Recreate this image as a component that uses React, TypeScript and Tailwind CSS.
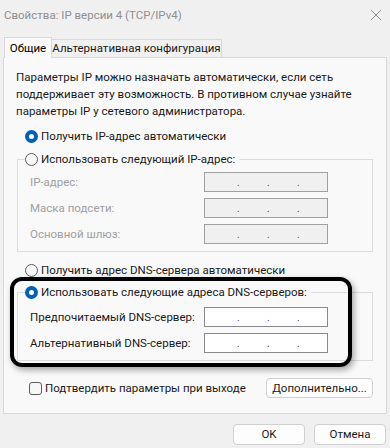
function Radio({ checked }: { checked?: boolean }) {
  return checked ? (
    <span className="flex h-[13px] w-[13px] shrink-0 items-center justify-center rounded-full bg-[#005fb8]">
      <span className="h-[5px] w-[5px] rounded-full bg-white" />
    </span>
  ) : (
    <span className="h-[13px] w-[13px] shrink-0 rounded-full border border-[#5c5c5c] bg-[#f7f7f7]" />
  );
}

function IpBox({ disabled }: { disabled?: boolean }) {
  return (
    <div
      className={
        "relative h-[20px] w-[124px] shrink-0 border " +
        (disabled ? "border-[#a0a0a0] bg-[#f0f0f0]" : "border-[#8a8a8a] bg-white")
      }
    >
      <div className="flex h-full items-end pb-[3px] pl-[32px] text-[10px] leading-none text-[#4a4a4a]">
        <span className="w-[30px]">.</span>
        <span className="w-[30px]">.</span>
        <span>.</span>
      </div>
    </div>
  );
}

function Row({ label, disabled }: { label: string; disabled?: boolean }) {
  return (
    <div className="flex items-center">
      <span className={"w-[174px] shrink-0 " + (disabled ? "text-[#a0a0a0]" : "text-[#1a1a1a]")}>{label}</span>
      <IpBox disabled={disabled} />
    </div>
  );
}

export default function App() {
  return (
    <div
      className="relative flex h-[448px] w-[390px] flex-col overflow-hidden whitespace-nowrap bg-[#f0f0f0] text-[11.5px] leading-[17px] text-[#1a1a1a]"
      style={{ fontFamily: 'Roboto, "Liberation Sans", Arial, sans-serif' }}
    >
      {/* title bar */}
      <div className="flex h-[30px] items-center justify-between pl-[4px] pr-[4px]">
        <span className="text-[#8f8f8f]">Свойства: IP версии 4 (TCP/IPv4)</span>
        <svg width="14" height="14" viewBox="0 0 14 14" className="mr-[3px]">
          <path d="M2 2 L12 12 M12 2 L2 12" stroke="#8f8f8f" strokeWidth="1" />
        </svg>
      </div>

      {/* tabs */}
      <div className="mt-[7px] flex items-end pl-[4px]">
        <div className="relative z-10 -mb-px flex h-[21px] w-[48px] items-center justify-center border border-b-0 border-[#d9d9d9] bg-[#f9f9f9] text-black">
          Общие
        </div>
        <div className="flex h-[18px] w-[170px] items-center justify-center border border-b-0 border-l-0 border-[#d9d9d9] bg-[#f0f0f0]">
          Альтернативная конфигурация
        </div>
      </div>

      {/* panel */}
      <div className="mx-[3px] flex h-[357px] flex-col border border-[#d9d9d9] bg-[#f9f9f9] pl-[12px] pr-[13px] pt-[11px]">
        <p>
          Параметры IP можно назначать автоматически, если сеть
          <br />
          поддерживает эту возможность. В противном случае узнайте
          <br />
          параметры IP у сетевого администратора.
        </p>

        <label className="ml-[9px] mt-[8px] flex items-center gap-[3px]">
          <Radio checked />
          <span>Получить IP-адрес автоматически</span>
        </label>

        <fieldset className="ml-[1px] mt-[6px] border border-[#dcdcdc] pb-[7px] pl-[12px]">
          <legend className="-ml-[5px] flex items-center gap-[3px] pr-[4px]">
            <Radio />
            <span>Использовать следующий IP-адрес:</span>
          </legend>
          <div className="mt-[4px] flex flex-col gap-[6px]">
            <Row label="IP-адрес:" disabled />
            <Row label="Маска подсети:" disabled />
            <Row label="Основной шлюз:" disabled />
          </div>
        </fieldset>

        <label className="ml-[9px] mt-[10px] flex items-center gap-[3px]">
          <Radio />
          <span>Получить адрес DNS-сервера автоматически</span>
        </label>

        <fieldset className="ml-[1px] mt-[5px] border border-[#dcdcdc] pb-[7px] pl-[12px]">
          <legend className="-ml-[5px] flex items-center gap-[3px] pr-[4px]">
            <Radio checked />
            <span>Использовать следующие адреса DNS-серверов:</span>
          </legend>
          <div className="mt-[6px] flex flex-col gap-[6px]">
            <Row label="Предпочитаемый DNS-сервер:" />
            <Row label="Альтернативный DNS-сервер:" />
          </div>
        </fieldset>

        <div className="mt-[17px] flex items-center justify-between">
          <label className="ml-[13px] flex items-center gap-[3px]">
            <span className="h-[13px] w-[13px] rounded-[3px] border border-[#5c5c5c] bg-[#f7f7f7]" />
            <span>Подтвердить параметры при выходе</span>
          </label>
          <button className="h-[20px] w-[107px] rounded-[4px] border border-[#d0d0d0] bg-[#fdfdfd]">
            Дополнительно...
          </button>
        </div>
      </div>

      {/* dialog buttons */}
      <div className="mt-[10px] flex justify-end gap-[9px] pr-[4px]">
        <button className="h-[21px] w-[72px] rounded-[4px] border border-[#d0d0d0] bg-[#fdfdfd]">OK</button>
        <button className="h-[21px] w-[72px] rounded-[4px] border border-[#d0d0d0] bg-[#fdfdfd]">Отмена</button>
      </div>

      {/* highlight annotation */}
      <div className="pointer-events-none absolute left-[10px] top-[277px] h-[90px] w-[342px] rounded-[12px] border-[4px] border-black shadow-[2px_3px_6px_rgba(0,0,0,0.35)]" />
    </div>
  );
}
